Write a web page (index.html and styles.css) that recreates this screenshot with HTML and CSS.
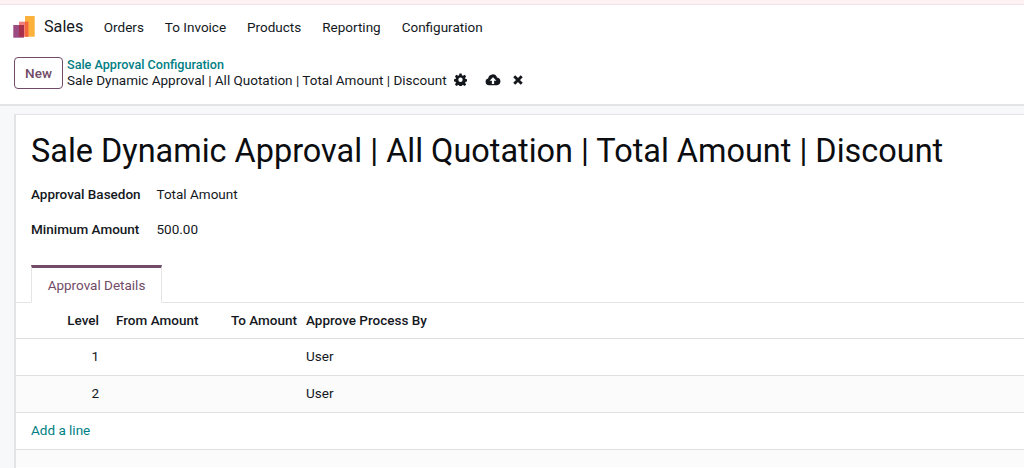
FILE: index.html
```html
<!DOCTYPE html>
<html lang="en">
<head>
<meta charset="utf-8">
<title>Sales</title>
<link rel="stylesheet" href="styles.css">
</head>
<body>
<div class="topstrip"></div>
<nav class="navbar">
  <svg class="logo" width="24" height="24" viewBox="0 0 24 24">
    <rect x="13" y="1" width="9.700" height="20.700" fill="#fbb13c"/>
    <rect x="7" y="6.700" width="9.300" height="15" fill="#f2807a"/>
    <rect x="13" y="6.700" width="3.300" height="15" fill="#f4683a"/>
    <rect x="1.300" y="10" width="10.700" height="12.700" fill="#9a4b82"/>
    <rect x="7" y="10" width="5" height="11.700" fill="#a82f4c"/>
  </svg>
  <span class="brand">Sales</span>
  <ul class="menu">
    <li>Orders</li>
    <li>To Invoice</li>
    <li>Products</li>
    <li>Reporting</li>
    <li>Configuration</li>
  </ul>
</nav>
<section class="controlbar">
  <button class="btn-new">New</button>
  <div class="crumbs">
    <a class="crumb-parent">Sale Approval Configuration</a>
    <div class="crumb-current">
      <span>Sale Dynamic Approval | All Quotation | Total Amount | Discount</span>
      <svg class="ic ic-gear" width="13" height="13" viewBox="0 0 24 24"><path fill="#14181d" fill-rule="evenodd" d="M10 1h4l.7 3.300 1.900.8 2.900-1.800 2.800 2.800-1.800 2.900.8 1.900 3.300.6v4l-3.200.7-.8 1.900 1.800 2.900-2.800 2.800-2.900-1.800-1.900.8-.7 3.300h-4l-.7-3.300-1.900-.8-2.900 1.800-2.800-2.800 1.800-2.900-.8-1.900-3.300-.7v-4l3.300-.6.8-1.900-1.800-2.900 2.800-2.800 2.900 1.800 1.900-.8zM12 8.500a4 4 0 1 0 0 8 4 4 0 0 0 0-8z"/></svg>
      <svg class="ic ic-cloud" width="16" height="14" viewBox="0 0 28 24"><path fill="#14181d" fill-rule="evenodd" d="M7 21a6 6 0 0 1-1.500-11.800A8 8 0 0 1 21 7.500a6.800 6.800 0 0 1 0 13.500zM14 7l-6 6.500h4V19h4v-5.500h4z"/></svg>
      <svg class="ic ic-x" width="10" height="10" viewBox="0 0 12 12"><path fill="none" stroke="#14181d" stroke-width="3.400" d="M1.500 1.500l9 9M10.500 1.500l-9 9"/></svg>
    </div>
  </div>
</section>
<main class="content">
  <div class="sheet">
    <h1 class="title">Sale Dynamic Approval | All Quotation | Total Amount | Discount</h1>
    <dl class="fields">
      <dt>Approval Basedon</dt><dd>Total Amount</dd>
      <dt>Minimum Amount</dt><dd>500.00</dd>
    </dl>
    <div class="tabs"><span class="tab">Approval Details</span></div>
    <table class="lines">
      <thead>
        <tr><th class="num c-level">Level</th><th class="c-from">From Amount</th><th class="num c-to">To Amount</th><th class="c-by">Approve Process By</th></tr>
      </thead>
      <tbody>
        <tr><td class="num">1</td><td></td><td></td><td class="c-by">User</td></tr>
        <tr class="alt"><td class="num">2</td><td></td><td></td><td class="c-by">User</td></tr>
        <tr><td colspan="4" class="add"><a>Add a line</a></td></tr>
        <tr class="alt"><td colspan="4" class="tail"></td></tr>
      </tbody>
    </table>
  </div>
</main>
</body>
</html>
```
FILE: styles.css
```css
* { box-sizing: border-box; }
html, body { margin: 0; height: 468px; overflow: hidden; }
body { font-family: Roboto, sans-serif; font-size: 13.500px; color: #14181d; background: #fff; }
.topstrip { height: 5px; background: #fdf3f5; border-bottom: 1px solid #f3e3e8; }
.navbar { height: 41px; display: flex; align-items: center; padding: 2px 0 0 12px; background: #fff; }
.logo { display: block; margin-right: 8px; }
.brand { font-size: 16.200px; margin-right: 10px; }
.menu { list-style: none; display: flex; margin: 0; padding: 0; }
.menu li { padding: 0 10.500px; }
.controlbar { height: 60px; display: flex; align-items: center; padding: 0 0 4px 14px; background: #fff; border-bottom: 2px solid #e4e4e6; }
.btn-new { width: 49px; height: 32px; padding: 0; background: #fff; border: 1px solid #714b67; border-radius: 4px; color: #714b67; font: 500 13.500px Roboto, sans-serif; }
.crumbs { margin: 0 0 2px 4px; }
.crumb-parent { display: block; color: #017e84; font-weight: 500; font-size: 12.600px; line-height: 15px; }
.crumb-current { display: flex; align-items: center; line-height: 16px; }
.ic { display: block; }
.ic-gear { margin-left: 7px; }
.ic-cloud { margin-left: 18px; }
.ic-x { margin-left: 12px; }
.content { height: 362px; padding: 8px 0 0 14px; background: #f7f8fa; }
.sheet { height: 100%; overflow: hidden; background: #fff; border-left: 2px solid #e4e4e6; border-top: 1px solid #e4e4e6; padding-top: 16px; }
.title { margin: 0 0 0 15px; font-size: 32.450px; font-weight: 400; line-height: 40px; color: #0b0d10; white-space: nowrap; }
.fields { display: grid; grid-template-columns: 125.500px 1fr; grid-auto-rows: 35px; margin: 5px 0 0 15px; align-items: center; }
.fields dt { font-weight: 500; }
.fields dd { margin: 0; }
.tabs { margin-top: 19px; height: 38px; padding-left: 15px; border-bottom: 1px solid #e4e4e6; display: flex; }
.tab { width: 131px; height: 38px; border: 1px solid #e4e4e6; border-top: 3px solid #714b67; border-bottom: 1px solid #fff; background: #fff; color: #714b67; display: flex; align-items: center; justify-content: center; }
.lines { width: 100%; border-collapse: collapse; table-layout: fixed; }
.lines th, .lines td { height: 37px; padding: 0 4px 1px; text-align: left; border-bottom: 1px solid #e0e0e0; vertical-align: middle; }
.lines th { font-weight: 500; height: 35px; }
.lines .num { text-align: right; }
.c-level { width: 87px; }
.lines .c-from { width: 110px; padding-left: 13px; }
.c-to { width: 88px; }
.lines .c-by { padding-left: 5px; }
.alt td { background: #fbfbfb; }
.lines .add { padding-left: 15px; }
.add a { color: #017e84; }
.lines .tail { height: 18px; border-bottom: 0; }
```
